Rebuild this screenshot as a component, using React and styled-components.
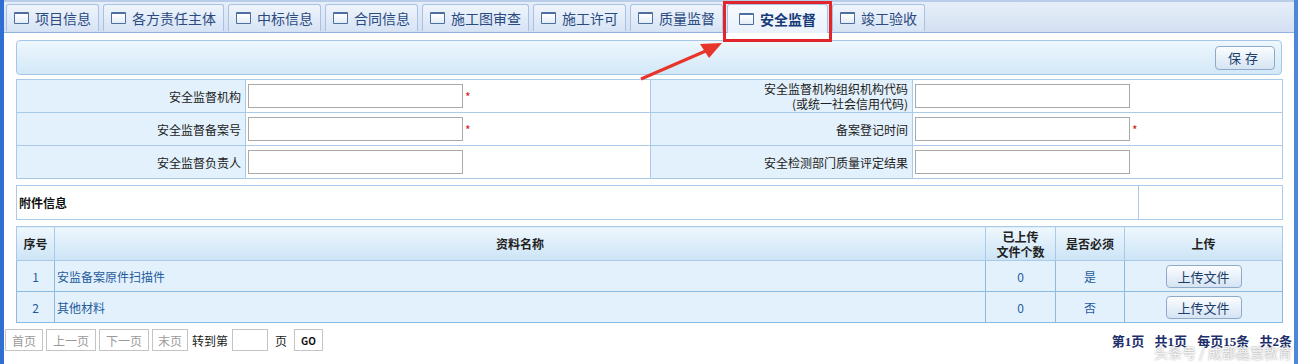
import React from "react";
import styled, { createGlobalStyle } from "styled-components";

const Global = createGlobalStyle`
  html, body { margin: 0; padding: 0; background: #fff; }
  body { font-family: "Noto Sans CJK SC", "Liberation Sans", sans-serif; font-size: 12px; color: #222; }
  * { box-sizing: border-box; }
`;

const Frame = styled.div`
  position: relative;
  width: 1298px;
  height: 364px;
  overflow: hidden;
  border-left: 4px solid #2f6fd3;
  border-right: 4px solid #4f86d8;
  display: flex;
  flex-direction: column;
`;

const TabBar = styled.div`
  height: 33px;
  display: flex;
  align-items: flex-end;
  gap: 4px;
  padding-left: 2px;
  border-top: 2px solid #b9cde8;
  border-bottom: 1px solid #8fb3e2;
  background: linear-gradient(#e6eef9, #d3e0f2);
`;

const Tab = styled.div`
  height: ${(p) => (p.$active ? "29px" : "27px")};
  margin-bottom: ${(p) => (p.$active ? "-1px" : "1px")};
  display: flex;
  align-items: center;
  gap: 6px;
  padding: 0 ${(p) => (p.$active ? "11px" : "7px")};
  border: 1px solid #a9c2e3;
  border-bottom: none;
  border-radius: 3px 3px 0 0;
  background: ${(p) =>
    p.$active ? "linear-gradient(#f6faff, #e9f1fb)" : "linear-gradient(#eef4fc, #d7e4f5)"};
  color: ${(p) => (p.$active ? "#163a78" : "#2b4a80")};
  font-size: 14px;
  font-weight: ${(p) => (p.$active ? 700 : 400)};
  white-space: nowrap;
`;

const TabIcon = styled.span`
  width: 15px;
  height: 12px;
  border: 1px solid #4d6f9f;
  border-top-width: 2px;
  background: linear-gradient(#ffffff, #e4ecf6);
  border-radius: 1px;
`;

const Content = styled.div`
  padding: 7px 12px 0 12px;
  display: flex;
  flex-direction: column;
`;

const Toolbar = styled.div`
  height: 35px;
  border: 1px solid #a6c6e8;
  border-radius: 4px;
  background: linear-gradient(#eef7fd, #d2e8f8);
  display: flex;
  align-items: center;
  justify-content: flex-end;
  padding-right: 6px;
`;

const Button = styled.button`
  font-family: inherit;
  height: ${(p) => p.$h || 24}px;
  width: ${(p) => p.$w || 60}px;
  border: 1px solid #8fa9c8;
  border-radius: 4px;
  background: linear-gradient(#fbfdff, #d5e4f3);
  color: #1c3d6c;
  font-size: ${(p) => p.$fs || 13}px;
  letter-spacing: ${(p) => p.$ls || 0}px;
  padding: 0;
  cursor: pointer;
`;

const Table = styled.table`
  border-collapse: collapse;
  width: 1266px;
  margin-top: ${(p) => p.$mt || 0}px;
  table-layout: fixed;
  td, th { border: 1px solid #a9cbe9; padding: 0; }
`;

const Label = styled.td`
  background: #e3f1fc;
  text-align: right;
  padding-right: 4px !important;
  height: 33px;
  line-height: 15px;
  color: #222;
`;

const Field = styled.td`
  background: #fff;
  padding-left: 2px !important;
`;

const Input = styled.input`
  width: 215px;
  height: 24px;
  border: 1px solid #a9a9a9;
  vertical-align: middle;
  margin: 0;
`;

const Star = styled.span`
  color: #d12020;
  margin-left: 2px;
  vertical-align: middle;
`;

const AttachRow = styled.td`
  height: 34px;
  background: #fff;
  font-weight: 700;
  padding-left: 2px !important;
  color: #111;
`;

const Th = styled.th`
  height: 34px;
  background: linear-gradient(#eef7fd, #cce4f6);
  font-weight: 700;
  color: #222;
  line-height: 15px;
  font-size: 12px;
`;

const Td = styled.td`
  height: 31px;
  background: #e3f1fc;
  color: #1f5b9c;
  text-align: ${(p) => p.$align || "center"};
  padding-left: ${(p) => (p.$align === "left" ? "2px" : "0")} !important;
  border-color: #8dbbe0 !important;
`;

const Pager = styled.div`
  display: flex;
  align-items: center;
  gap: 3px;
  margin-top: 6px;
  padding: 0 2px 0 1px;
  height: 22px;
`;

const PageBtn = styled.span`
  height: 22px;
  padding: 0 ${(p) => p.$pad || 6}px;
  border: 1px solid #c4c4c4;
  color: ${(p) => (p.$strong ? "#111" : "#9a9a9a")};
  font-weight: ${(p) => (p.$strong ? 700 : 400)};
  font-size: ${(p) => (p.$strong ? "10px" : "12px")};
  display: flex;
  align-items: center;
  background: #fff;
`;

const PagerText = styled.span`
  color: #222;
  margin: 0 ${(p) => p.$m || 6}px;
`;

const PageInput = styled.input`
  width: 36px;
  height: 22px;
  border: 1px solid #c4c4c4;
  margin: 0;
`;

const PageInfo = styled.span`
  margin-left: auto;
  color: #1d2f6b;
  font-weight: 700;
  font-size: 13px;
  word-spacing: 7px;
  font-family: "Liberation Serif", "Noto Sans CJK SC", serif;
`;

const Overlay = styled.svg`
  position: absolute;
  left: -4px;
  top: 0;
  pointer-events: none;
`;

const Watermark = styled.div`
  position: absolute;
  right: 2px;
  bottom: 2px;
  color: rgba(255, 255, 255, 0.85);
  text-shadow: 0 0 2px rgba(0, 0, 0, 0.45);
  font-size: 14px;
  white-space: nowrap;
`;

const tabs = ["项目信息", "各方责任主体", "中标信息", "合同信息", "施工图审查", "施工许可", "质量监督", "安全监督", "竣工验收"];

export default function App() {
  return (
    <>
      <Global />
      <Frame>
        <TabBar>
          {tabs.map((t) => (
            <Tab key={t} $active={t === "安全监督"}>
              <TabIcon />
              {t}
            </Tab>
          ))}
        </TabBar>
        <Content>
          <Toolbar>
            <Button $ls={4}>保存</Button>
          </Toolbar>
          <Table $mt={4}>
            <colgroup>
              <col style={{ width: 229 }} />
              <col style={{ width: 405 }} />
              <col style={{ width: 262 }} />
              <col style={{ width: 370 }} />
            </colgroup>
            <tbody>
              <tr>
                <Label>安全监督机构</Label>
                <Field><Input /><Star>*</Star></Field>
                <Label>安全监督机构组织机构代码<br />(或统一社会信用代码)</Label>
                <Field><Input /></Field>
              </tr>
              <tr>
                <Label>安全监督备案号</Label>
                <Field><Input /><Star>*</Star></Field>
                <Label>备案登记时间</Label>
                <Field><Input /><Star>*</Star></Field>
              </tr>
              <tr>
                <Label>安全监督负责人</Label>
                <Field><Input /></Field>
                <Label>安全检测部门质量评定结果</Label>
                <Field><Input /></Field>
              </tr>
            </tbody>
          </Table>
          <Table $mt={6}>
            <colgroup>
              <col style={{ width: 1122 }} />
              <col style={{ width: 144 }} />
            </colgroup>
            <tbody>
              <tr>
                <AttachRow>附件信息</AttachRow>
                <AttachRow />
              </tr>
            </tbody>
          </Table>
          <Table $mt={6}>
            <colgroup>
              <col style={{ width: 38 }} />
              <col style={{ width: 931 }} />
              <col style={{ width: 70 }} />
              <col style={{ width: 69 }} />
              <col style={{ width: 158 }} />
            </colgroup>
            <thead>
              <tr>
                <Th>序号</Th>
                <Th>资料名称</Th>
                <Th>已上传<br />文件个数</Th>
                <Th>是否必须</Th>
                <Th>上传</Th>
              </tr>
            </thead>
            <tbody>
              {[
                ["1", "安监备案原件扫描件", "0", "是"],
                ["2", "其他材料", "0", "否"],
              ].map((r) => (
                <tr key={r[0]}>
                  <Td>{r[0]}</Td>
                  <Td $align="left">{r[1]}</Td>
                  <Td>{r[2]}</Td>
                  <Td>{r[3]}</Td>
                  <Td><Button $w={76} $h={23} $fs={13}>上传文件</Button></Td>
                </tr>
              ))}
            </tbody>
          </Table>
        </Content>
        <Pager>
          <PageBtn>首页</PageBtn>
          <PageBtn>上一页</PageBtn>
          <PageBtn>下一页</PageBtn>
          <PageBtn $pad={5}>末页</PageBtn>
          <PagerText $m={1}>转到第</PagerText>
          <PageInput />
          <PagerText $m={4}>页</PagerText>
          <PageBtn $strong $pad={6}>GO</PageBtn>
          <PageInfo>第1页 共1页 每页15条 共2条</PageInfo>
        </Pager>
        <Overlay width="1298" height="364" viewBox="0 0 1298 364">
          <rect x="724.5" y="2.5" width="106" height="38" fill="none" stroke="#e0262a" strokeWidth="3" />
          <line x1="641" y1="79" x2="708" y2="50" stroke="#e8352c" strokeWidth="3" />
          <polygon points="722,43 700,44 709,58" fill="#e8352c" />
        </Overlay>
        <Watermark>头条号 / 成都鑫慧教育</Watermark>
      </Frame>
    </>
  );
}
